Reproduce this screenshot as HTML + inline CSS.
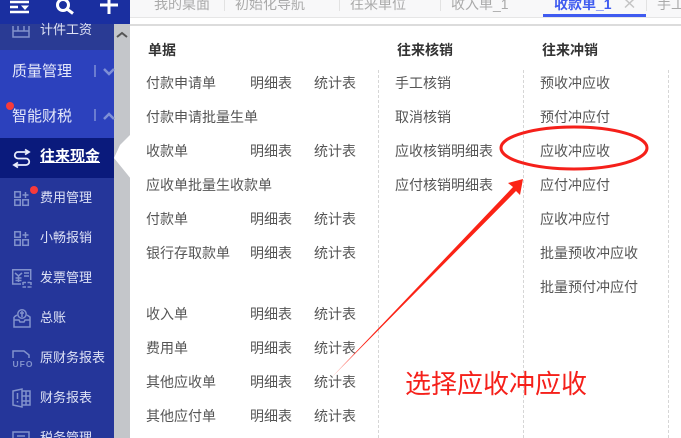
<!DOCTYPE html>
<html lang="zh"><head><meta charset="utf-8">
<style>
html,body{margin:0;padding:0;background:#fff}
#p{position:relative;width:681px;height:438px;overflow:hidden;background:#fff;font-family:"Liberation Sans","Noto Sans CJK SC",sans-serif}
#p div{position:absolute;white-space:nowrap}
.t{font-size:14px;line-height:20px;color:#555}
.h{font-size:14px;line-height:20px;color:#333;font-weight:bold}
.g{font-size:14px;line-height:20px;color:#aaa}
.s{font-size:13px;line-height:20px;color:#dfe3f6}
.m{font-size:15px;line-height:20px;color:#e6e9fa}
.v{width:0;border-left:1px dashed #d6d6d6;top:70px;height:368px}
</style></head><body><div id="p">
<!-- sidebar -->
<div style="left:0;top:24px;width:114px;height:414px;background:#25369a"></div>
<div style="left:0;top:24px;width:114px;height:26px;background:#2a3b94"></div>
<div style="left:0;top:50px;width:114px;height:88px;background:#2c41bd"></div>
<div style="left:0;top:138px;width:114px;height:40px;background:#0a1a7c"></div>
<!-- top bar -->
<div style="left:0;top:0;width:130px;height:24px;background:#1a2fa0"></div>
<!-- scrollbar -->
<div style="left:114px;top:24px;width:16px;height:414px;background:#c4c6ca"></div>
<svg style="position:absolute;left:0;top:0" width="135" height="438" fill="none">
<path d="M117 37l5-4 5 4" stroke="#555" stroke-width="2"/>
<path d="M131 134L120 145 114 158 131 179z" fill="#fff"/>
<!-- top icons -->
<path d="M10 2h19M10 7h8M10 12h19" stroke="#fff" stroke-width="2.400"/>
<path d="M21 5.500h8L25 10z" fill="#fff"/>
<circle cx="63" cy="5" r="5.500" stroke="#fff" stroke-width="3"/>
<path d="M67 9l6 4.500" stroke="#fff" stroke-width="3"/>
<path d="M100 5h18M109 0v14" stroke="#fff" stroke-width="3"/>
<!-- dividers -->
<path d="M95 65v12M95 109v12" stroke="#7f8fd6" stroke-width="1.500"/>
<path d="M104 69l5 5 5-5" stroke="#7f8fd6" stroke-width="2.500"/>
<path d="M104 119l5-5 5 5" stroke="#7f8fd6" stroke-width="2.500"/>
<!-- icons -->
<g stroke="#8292cc" stroke-width="1.500">
<path d="M13 26v11h16V26M13 31h16M18 26v5h6v-5"/>
<rect x="14.800" y="191.800" width="5.500" height="5.500"/><rect x="14.800" y="199.800" width="5.500" height="5.500"/><rect x="22.800" y="199.800" width="5.500" height="5.500"/><path d="M22.500 195h6M25.500 192v6"/>
<rect x="14.800" y="231.800" width="5.500" height="5.500"/><rect x="14.800" y="239.800" width="5.500" height="5.500"/><rect x="22.800" y="239.800" width="5.500" height="5.500"/><path d="M22.500 235h6M25.500 232v6"/>
<path d="M21 284h-8.300V269.700h18V280"/><path d="M15 273l3.500 3 3.500-3M18.500 276v6M15.500 278h6M15.500 280.500h6M24 273h5M24 276h5"/>
<path d="M23 282.500h8M23 287h8M23 282v5.500M31 282v5.500" stroke-dasharray="3 1.500"/>
<path d="M14 317v10h16v-10l-3-2M14 317l3-2M14 320h5l1 2h4l1-2h5"/><circle cx="22" cy="314" r="4.200"/><path d="M22 311v6M20 313h4"/>
<path d="M13 358v-7h11l5 4v3" />
<path d="M13 391l9-2v18l-9-2zM22 391h8v14h-8M26 391v14M22 396h8M22 401h8M17.500 393v6M17.500 401v1.500"/>
<path d="M13 438v-6h16v6M17 436h8"/>
</g>
<path d="M29 152H18a3.200 3.200 0 0 0 0 6.500h8a3.200 3.200 0 0 1 0 6.500H15M25 149.500l4 2.500-4 2.500M18 162.500l-4 2.500 4 2.500" stroke="#e8ecfb" stroke-width="1.800"/>
<text x="12.500" y="367" font-family="Liberation Sans" font-size="8.500" font-weight="bold" fill="#8292cc" letter-spacing="1">UFO</text>
<circle cx="10" cy="106" r="4" fill="#f83a3a"/>
<circle cx="34" cy="190" r="4" fill="#f83a3a"/>
</svg>
<div class="s" style="left:40px;top:20px">计件工资</div>
<div style="left:40px;top:147px;font-size:15px;line-height:20px;color:#fff;font-weight:bold;text-decoration:underline">往来现金</div>
<div style="left:0;top:1px">
<div class="m" style="left:12px;top:61px">质量管理</div>
<div class="m" style="left:12px;top:106px">智能财税</div>
<div class="s" style="left:40px;top:187px">费用管理</div>
<div class="s" style="left:40px;top:227px">小畅报销</div>
<div class="s" style="left:40px;top:267px">发票管理</div>
<div class="s" style="left:40px;top:307px">总账</div>
<div class="s" style="left:40px;top:347px">原财务报表</div>
<div class="s" style="left:40px;top:387px">财务报表</div>
<div class="s" style="left:40px;top:427px">税务管理</div>
</div>
<!-- tabs -->
<div style="left:130px;top:0;width:551px;height:17px;background:#f8f8f9;border-bottom:1px solid #e6e6e6"></div>
<div style="left:130px;top:24px;width:551px;height:2px;background:#dcdcdc"></div>
<div class="g" style="left:154px;top:-6px">我的桌面</div>
<div class="g" style="left:235px;top:-6px">初始化导航</div>
<div class="g" style="left:350px;top:-6px">往来单位</div>
<div class="g" style="left:451px;top:-6px">收入单_1</div>
<div style="left:554px;top:-6px;font-size:14px;line-height:20px;color:#3f5bf0;font-weight:bold">收款单_1</div>
<div class="g" style="left:657px;top:-6px">手工</div>
<svg style="position:absolute;left:620px;top:0" width="20" height="10" fill="none"><path d="M5 -1L14 7.500M14 -1L5 7.500" stroke="#c4c4c4" stroke-width="1.500"/></svg>
<div style="left:543px;top:14px;width:103px;height:3px;background:#3f5bf0"></div>
<div style="left:224px;top:0;width:1px;height:11px;background:#e2e2e2"></div>
<div style="left:339px;top:0;width:1px;height:11px;background:#e2e2e2"></div>
<div style="left:440px;top:0;width:1px;height:11px;background:#e2e2e2"></div>
<div style="left:646px;top:0;width:1px;height:11px;background:#e2e2e2"></div>
<!-- heads -->
<div class="h" style="left:148px;top:40px">单据</div>
<div class="h" style="left:397px;top:40px">往来核销</div>
<div class="h" style="left:542px;top:40px">往来冲销</div>
<!-- dashed -->
<div class="v" style="left:378px"></div>
<div class="v" style="left:523px"></div>
<div class="v" style="left:668px"></div>
<div style="left:0;top:1px">
<!-- col1 -->
<div class="t" style="left:146px;top:72px">付款申请单</div><div class="t" style="left:250px;top:72px">明细表</div><div class="t" style="left:314px;top:72px">统计表</div>
<div class="t" style="left:146px;top:106px">付款申请批量生单</div>
<div class="t" style="left:146px;top:140px">收款单</div><div class="t" style="left:250px;top:140px">明细表</div><div class="t" style="left:314px;top:140px">统计表</div>
<div class="t" style="left:146px;top:174px">应收单批量生收款单</div>
<div class="t" style="left:146px;top:208px">付款单</div><div class="t" style="left:250px;top:208px">明细表</div><div class="t" style="left:314px;top:208px">统计表</div>
<div class="t" style="left:146px;top:242px">银行存取款单</div><div class="t" style="left:250px;top:242px">明细表</div><div class="t" style="left:314px;top:242px">统计表</div>
<div class="t" style="left:146px;top:303px">收入单</div><div class="t" style="left:250px;top:303px">明细表</div><div class="t" style="left:314px;top:303px">统计表</div>
<div class="t" style="left:146px;top:337px">费用单</div><div class="t" style="left:250px;top:337px">明细表</div><div class="t" style="left:314px;top:337px">统计表</div>
<div class="t" style="left:146px;top:371px">其他应收单</div><div class="t" style="left:250px;top:371px">明细表</div><div class="t" style="left:314px;top:371px">统计表</div>
<div class="t" style="left:146px;top:405px">其他应付单</div><div class="t" style="left:250px;top:405px">明细表</div><div class="t" style="left:314px;top:405px">统计表</div>
<!-- col2 -->
<div class="t" style="left:395px;top:72px">手工核销</div>
<div class="t" style="left:395px;top:106px">取消核销</div>
<div class="t" style="left:395px;top:140px">应收核销明细表</div>
<div class="t" style="left:395px;top:174px">应付核销明细表</div>
<!-- col3 -->
<div class="t" style="left:540px;top:72px">预收冲应收</div>
<div class="t" style="left:540px;top:106px">预付冲应付</div>
<div class="t" style="left:540px;top:140px">应收冲应收</div>
<div class="t" style="left:540px;top:174px">应付冲应付</div>
<div class="t" style="left:540px;top:208px">应收冲应付</div>
<div class="t" style="left:540px;top:242px">批量预收冲应收</div>
<div class="t" style="left:540px;top:276px">批量预付冲应付</div>
</div>
<!-- annotations -->
<svg style="position:absolute;left:0;top:0" width="681" height="438" fill="none">
<ellipse cx="574" cy="148" rx="73" ry="21" stroke="#f5201a" stroke-width="3"/>
<path d="M332 377L513 187 508 183 523 179 520 195 516 191z" fill="#fb2316"/>
</svg>
<div style="left:405px;top:368px;font-size:26px;line-height:32px;color:#f5201a">选择应收冲应收</div>
</div></body></html>
